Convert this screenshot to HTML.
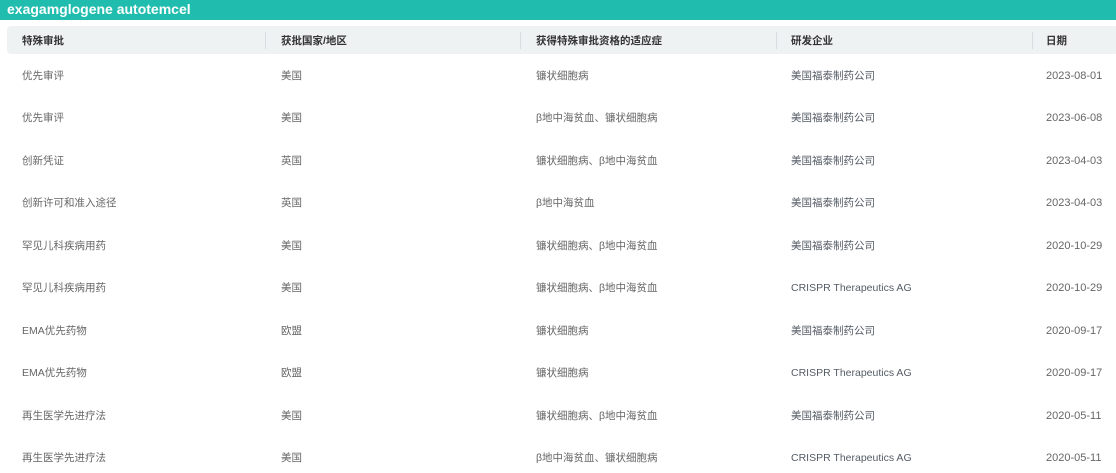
<!DOCTYPE html>
<html><head><meta charset="utf-8"><style>
body{margin:0;width:1116px;height:473px;overflow:hidden;background:#fff;font-family:"Liberation Sans","Noto Sans CJK SC",sans-serif;}
.top{position:absolute;left:0;top:0;width:1116px;height:20px;background:#20bdae;color:#fff;font-weight:bold;font-size:14px;line-height:18px;padding-left:7px;box-sizing:border-box;}
.hd{position:absolute;left:7px;top:26px;width:1112px;height:28px;background:#eef2f3;border-radius:4px;}
.c{position:absolute;font-size:10.5px;color:#666;white-space:nowrap;line-height:14px;}
.h{font-weight:bold;color:#333;font-size:10.5px;}
.sep{position:absolute;top:32px;width:1px;height:17px;background:#d8dcde;}
.blue{color:#555c66;}
</style></head><body>
<div class="top">exagamglogene autotemcel</div>
<div class="hd"></div>
<div class="sep" style="left:265px"></div><div class="sep" style="left:520px"></div><div class="sep" style="left:776px"></div><div class="sep" style="left:1032px"></div>
<div class="c h" style="left:22px;top:34px">特殊审批</div>
<div class="c h" style="left:281px;top:34px">获批国家/地区</div>
<div class="c h" style="left:536px;top:34px">获得特殊审批资格的适应症</div>
<div class="c h" style="left:791px;top:34px">研发企业</div>
<div class="c h" style="left:1046px;top:34px">日期</div>
<div id="rows"></div>
<script>
var d=[["优先审评","美国","镰状细胞病","美国福泰制药公司","2023-08-01"],
["优先审评","美国","β地中海贫血、镰状细胞病","美国福泰制药公司","2023-06-08"],
["创新凭证","英国","镰状细胞病、β地中海贫血","美国福泰制药公司","2023-04-03"],
["创新许可和准入途径","英国","β地中海贫血","美国福泰制药公司","2023-04-03"],
["罕见儿科疾病用药","美国","镰状细胞病、β地中海贫血","美国福泰制药公司","2020-10-29"],
["罕见儿科疾病用药","美国","镰状细胞病、β地中海贫血","CRISPR Therapeutics AG","2020-10-29"],
["EMA优先药物","欧盟","镰状细胞病","美国福泰制药公司","2020-09-17"],
["EMA优先药物","欧盟","镰状细胞病","CRISPR Therapeutics AG","2020-09-17"],
["再生医学先进疗法","美国","镰状细胞病、β地中海贫血","美国福泰制药公司","2020-05-11"],
["再生医学先进疗法","美国","β地中海贫血、镰状细胞病","CRISPR Therapeutics AG","2020-05-11"]];
var xs=[22,281,536,791,1046],h="";
d.forEach(function(r,i){var y=68.5+i*42.5;r.forEach(function(t,j){h+='<div class="c'+(j==3?' blue':'')+'" style="left:'+xs[j]+'px;top:'+y+'px;'+(j==4?'font-size:11px;':'')+'">'+t+'</div>';});});
document.getElementById('rows').innerHTML=h;
</script>
</body></html>
